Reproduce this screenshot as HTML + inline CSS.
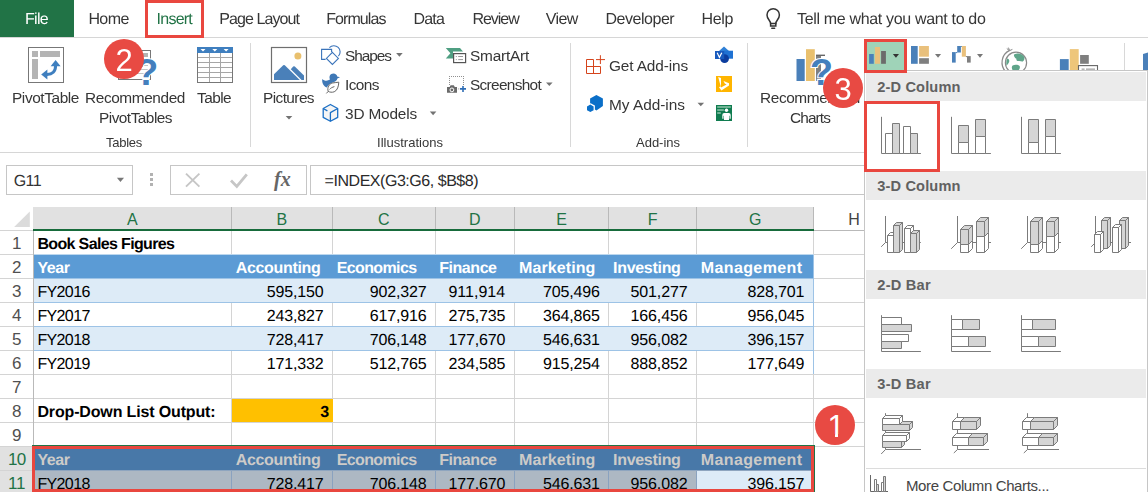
<!DOCTYPE html>
<html lang="en"><head><meta charset="utf-8"><title>Excel Insert Column Chart</title>
<style>
html,body{margin:0;padding:0;background:#fff;}
body{width:1148px;height:492px;overflow:hidden;font-family:"Liberation Sans",sans-serif;}
#app{position:relative;width:1148px;height:492px;overflow:hidden;background:#fff;}
.t,.t2{position:absolute;white-space:nowrap;line-height:20px;height:20px;}
.a{position:absolute;}
.badge{position:absolute;width:40px;height:40px;border-radius:50%;background:#e84a43;color:#fff;font-size:31px;line-height:44px;text-align:center;}
svg{position:absolute;overflow:visible;}
.gl{position:absolute;left:0;top:0;width:864px;height:152px;will-change:transform;}

</style></head>
<body>
<div id="app">
<!-- tab bar -->
<div class="a" style="left:0;top:0;width:74px;height:37px;background:#217346"></div>
<div class="a" style="left:0;top:37px;width:1148px;height:1px;background:#d6d6d6"></div>
<div class="a" style="left:145px;top:0px;width:53px;height:32px;border:3px solid #e9473f"></div>
<!-- ribbon bottom -->
<div class="a" style="left:0;top:152px;width:866px;height:1px;background:#d6d6d6"></div>
<!-- group separators -->
<div class="a" style="left:250px;top:43px;width:1px;height:104px;background:#d8d8d8"></div>
<div class="a" style="left:570px;top:43px;width:1px;height:104px;background:#d8d8d8"></div>
<div class="a" style="left:747px;top:43px;width:1px;height:104px;background:#d8d8d8"></div>
<div class="a" style="left:1124px;top:43px;width:1px;height:28px;background:#d8d8d8"></div>

<!-- formula bar -->
<div class="a" style="left:6px;top:165px;width:127px;height:30px;border:1px solid #c6c6c6;box-sizing:border-box"></div>
<div class="a" style="left:170px;top:165px;width:137px;height:30px;border:1px solid #c6c6c6;box-sizing:border-box"></div>
<div class="a" style="left:310px;top:165px;width:560px;height:30px;border:1px solid #c6c6c6;box-sizing:border-box"></div>

<!-- sheet -->
<div id="sheet" class="a" style="left:0;top:207px;width:866px;height:285px;overflow:hidden">
<div class="a" style="left:33px;top:0px;width:781px;height:22px;background:#e1e1e1;"></div>
<div class="a" style="left:0px;top:240px;width:33px;height:48px;background:#e1e1e1;"></div>
<svg style="left:0;top:0" width="34" height="24" viewBox="0 0 34 24"><path d="M29.8 4.6 V19.9 H14.1 Z" fill="#dbdbdb"/></svg>
<div class="a" style="left:231px;top:0px;width:1px;height:22px;background:#b9b9b9;"></div>
<div class="a" style="left:332px;top:0px;width:1px;height:22px;background:#b9b9b9;"></div>
<div class="a" style="left:435px;top:0px;width:1px;height:22px;background:#b9b9b9;"></div>
<div class="a" style="left:514px;top:0px;width:1px;height:22px;background:#b9b9b9;"></div>
<div class="a" style="left:608px;top:0px;width:1px;height:22px;background:#b9b9b9;"></div>
<div class="a" style="left:696px;top:0px;width:1px;height:22px;background:#b9b9b9;"></div>
<div class="a" style="left:813px;top:0px;width:1px;height:22px;background:#b9b9b9;"></div>
<div class="a" style="left:814px;top:23px;width:52px;height:1px;background:#b9b9b9;"></div>
<div class="a" style="left:33px;top:22px;width:781px;height:2px;background:#176b3b;"></div>
<div class="a" style="left:0px;top:23px;width:33px;height:1px;background:#d4d4d4;"></div>
<div class="a" style="left:34px;top:48px;width:779px;height:23px;background:#5b9bd5;"></div>
<div class="a" style="left:34px;top:72px;width:779px;height:23px;background:#ddebf7;"></div>
<div class="a" style="left:34px;top:120px;width:779px;height:23px;background:#ddebf7;"></div>
<div class="a" style="left:232px;top:192px;width:100px;height:23px;background:#ffc000;"></div>
<div class="a" style="left:34px;top:240px;width:779px;height:23px;background:#4878a8;"></div>
<div class="a" style="left:34px;top:263px;width:779px;height:1px;background:#8ea5bf;"></div>
<div class="a" style="left:34px;top:264px;width:779px;height:24px;background:#adb8c3;"></div>
<div class="a" style="left:697px;top:264px;width:116px;height:24px;background:#ddebf7;"></div>
<div class="a" style="left:0px;top:47px;width:33px;height:1px;background:#d4d4d4;"></div>
<div class="a" style="left:34px;top:47px;width:780px;height:1px;background:#bcd7ee;"></div>
<div class="a" style="left:814px;top:47px;width:60px;height:1px;background:#d4d4d4;"></div>
<div class="a" style="left:0px;top:71px;width:33px;height:1px;background:#d4d4d4;"></div>
<div class="a" style="left:34px;top:71px;width:780px;height:1px;background:#9dc3e6;"></div>
<div class="a" style="left:814px;top:71px;width:60px;height:1px;background:#d4d4d4;"></div>
<div class="a" style="left:0px;top:95px;width:33px;height:1px;background:#d4d4d4;"></div>
<div class="a" style="left:34px;top:95px;width:780px;height:1px;background:#9dc3e6;"></div>
<div class="a" style="left:814px;top:95px;width:60px;height:1px;background:#d4d4d4;"></div>
<div class="a" style="left:0px;top:119px;width:33px;height:1px;background:#d4d4d4;"></div>
<div class="a" style="left:34px;top:119px;width:780px;height:1px;background:#9dc3e6;"></div>
<div class="a" style="left:814px;top:119px;width:60px;height:1px;background:#d4d4d4;"></div>
<div class="a" style="left:0px;top:143px;width:33px;height:1px;background:#d4d4d4;"></div>
<div class="a" style="left:34px;top:143px;width:780px;height:1px;background:#9dc3e6;"></div>
<div class="a" style="left:814px;top:143px;width:60px;height:1px;background:#d4d4d4;"></div>
<div class="a" style="left:0px;top:167px;width:33px;height:1px;background:#d4d4d4;"></div>
<div class="a" style="left:34px;top:167px;width:841px;height:1px;background:#d4d4d4;"></div>
<div class="a" style="left:0px;top:191px;width:33px;height:1px;background:#d4d4d4;"></div>
<div class="a" style="left:34px;top:191px;width:841px;height:1px;background:#d4d4d4;"></div>
<div class="a" style="left:0px;top:215px;width:33px;height:1px;background:#d4d4d4;"></div>
<div class="a" style="left:34px;top:215px;width:841px;height:1px;background:#d4d4d4;"></div>
<div class="a" style="left:0px;top:239px;width:33px;height:1px;background:#d4d4d4;"></div>
<div class="a" style="left:34px;top:239px;width:841px;height:1px;background:#d4d4d4;"></div>
<div class="a" style="left:0px;top:263px;width:33px;height:1px;background:#d4d4d4;"></div>
<div class="a" style="left:0px;top:287px;width:33px;height:1px;background:#d4d4d4;"></div>
<div class="a" style="left:34px;top:287px;width:841px;height:1px;background:#d4d4d4;"></div>
<div class="a" style="left:33px;top:24px;width:1px;height:270px;background:#b9b9b9;"></div>
<div class="a" style="left:231px;top:24px;width:1px;height:23px;background:#d4d4d4;"></div>
<div class="a" style="left:231px;top:96px;width:1px;height:23px;background:#d4d4d4;"></div>
<div class="a" style="left:231px;top:144px;width:1px;height:23px;background:#d4d4d4;"></div>
<div class="a" style="left:231px;top:168px;width:1px;height:23px;background:#d4d4d4;"></div>
<div class="a" style="left:231px;top:192px;width:1px;height:23px;background:#d4d4d4;"></div>
<div class="a" style="left:231px;top:216px;width:1px;height:23px;background:#d4d4d4;"></div>
<div class="a" style="left:231px;top:264px;width:1px;height:24px;background:#8aa2bf;"></div>
<div class="a" style="left:332px;top:24px;width:1px;height:23px;background:#d4d4d4;"></div>
<div class="a" style="left:332px;top:96px;width:1px;height:23px;background:#d4d4d4;"></div>
<div class="a" style="left:332px;top:144px;width:1px;height:23px;background:#d4d4d4;"></div>
<div class="a" style="left:332px;top:168px;width:1px;height:23px;background:#d4d4d4;"></div>
<div class="a" style="left:332px;top:192px;width:1px;height:23px;background:#ffc000;"></div>
<div class="a" style="left:332px;top:216px;width:1px;height:23px;background:#d4d4d4;"></div>
<div class="a" style="left:332px;top:264px;width:1px;height:24px;background:#8aa2bf;"></div>
<div class="a" style="left:435px;top:24px;width:1px;height:23px;background:#d4d4d4;"></div>
<div class="a" style="left:435px;top:96px;width:1px;height:23px;background:#d4d4d4;"></div>
<div class="a" style="left:435px;top:144px;width:1px;height:23px;background:#d4d4d4;"></div>
<div class="a" style="left:435px;top:168px;width:1px;height:23px;background:#d4d4d4;"></div>
<div class="a" style="left:435px;top:192px;width:1px;height:23px;background:#d4d4d4;"></div>
<div class="a" style="left:435px;top:216px;width:1px;height:23px;background:#d4d4d4;"></div>
<div class="a" style="left:435px;top:264px;width:1px;height:24px;background:#8aa2bf;"></div>
<div class="a" style="left:514px;top:24px;width:1px;height:23px;background:#d4d4d4;"></div>
<div class="a" style="left:514px;top:96px;width:1px;height:23px;background:#d4d4d4;"></div>
<div class="a" style="left:514px;top:144px;width:1px;height:23px;background:#d4d4d4;"></div>
<div class="a" style="left:514px;top:168px;width:1px;height:23px;background:#d4d4d4;"></div>
<div class="a" style="left:514px;top:192px;width:1px;height:23px;background:#d4d4d4;"></div>
<div class="a" style="left:514px;top:216px;width:1px;height:23px;background:#d4d4d4;"></div>
<div class="a" style="left:514px;top:264px;width:1px;height:24px;background:#8aa2bf;"></div>
<div class="a" style="left:608px;top:24px;width:1px;height:23px;background:#d4d4d4;"></div>
<div class="a" style="left:608px;top:96px;width:1px;height:23px;background:#d4d4d4;"></div>
<div class="a" style="left:608px;top:144px;width:1px;height:23px;background:#d4d4d4;"></div>
<div class="a" style="left:608px;top:168px;width:1px;height:23px;background:#d4d4d4;"></div>
<div class="a" style="left:608px;top:192px;width:1px;height:23px;background:#d4d4d4;"></div>
<div class="a" style="left:608px;top:216px;width:1px;height:23px;background:#d4d4d4;"></div>
<div class="a" style="left:608px;top:264px;width:1px;height:24px;background:#8aa2bf;"></div>
<div class="a" style="left:696px;top:24px;width:1px;height:23px;background:#d4d4d4;"></div>
<div class="a" style="left:696px;top:96px;width:1px;height:23px;background:#d4d4d4;"></div>
<div class="a" style="left:696px;top:144px;width:1px;height:23px;background:#d4d4d4;"></div>
<div class="a" style="left:696px;top:168px;width:1px;height:23px;background:#d4d4d4;"></div>
<div class="a" style="left:696px;top:192px;width:1px;height:23px;background:#d4d4d4;"></div>
<div class="a" style="left:696px;top:216px;width:1px;height:23px;background:#d4d4d4;"></div>
<div class="a" style="left:696px;top:264px;width:1px;height:24px;background:#8aa2bf;"></div>
<div class="a" style="left:813px;top:24px;width:1px;height:23px;background:#d4d4d4;"></div>
<div class="a" style="left:813px;top:48px;width:1px;height:23px;background:#9dc3e6;"></div>
<div class="a" style="left:813px;top:72px;width:1px;height:23px;background:#9dc3e6;"></div>
<div class="a" style="left:813px;top:96px;width:1px;height:23px;background:#9dc3e6;"></div>
<div class="a" style="left:813px;top:120px;width:1px;height:23px;background:#9dc3e6;"></div>
<div class="a" style="left:813px;top:144px;width:1px;height:23px;background:#9dc3e6;"></div>
<div class="a" style="left:813px;top:168px;width:1px;height:23px;background:#d4d4d4;"></div>
<div class="a" style="left:813px;top:192px;width:1px;height:23px;background:#d4d4d4;"></div>
<div class="a" style="left:813px;top:216px;width:1px;height:23px;background:#d4d4d4;"></div>
<div class="a" style="left:813px;top:240px;width:1px;height:23px;background:#d4d4d4;"></div>
<div class="a" style="left:813px;top:264px;width:1px;height:24px;background:#8aa2bf;"></div>
<div class="a" style="left:32px;top:238px;width:781px;height:46px;border:1px solid #217346"></div>
</div>

<div class="a" style="left:866px;top:41px;width:39px;height:30px;background:#9fd3b8"></div>
<svg style="left:0;top:0" width="1148" height="160" viewBox="0 0 1148 160">
<g fill="none" stroke="#333" stroke-width="1.5" stroke-linecap="round"><path d="M770.6 23.4 C770.4 20.5 767 19 767 14.9 A6.2 6.2 0 1 1 779.4 14.9 C779.4 19 776 20.5 775.8 23.4 Z"/><path d="M770.6 23.4 V26 H775.8 V23.4"/><path d="M771.8 28.2 H774.6"/></g>
<g><rect x="28.5" y="47.5" width="35" height="35" fill="#fff" stroke="#777"/><rect x="32" y="51" width="6" height="6" fill="#b4b4b4"/><rect x="40" y="51" width="20" height="6" fill="#b4b4b4"/><rect x="32" y="59" width="6" height="20" fill="#b4b4b4"/><path d="M46.5 74.4 C52.5 74.6 55.6 71.5 55.6 65.5" fill="none" stroke="#3f7fbf" stroke-width="3"/><path d="M50.6 66.2 L55.6 60 L60.6 66.2 Z" fill="#3f7fbf"/><path d="M47.4 69.4 L41.2 74.4 L47.4 79.4 Z" fill="#3f7fbf"/></g>
<g><rect x="118.5" y="50.5" width="32" height="29" fill="#fff" stroke="#777"/><rect x="140" y="53" width="8" height="4" fill="#b4b4b4"/><g stroke="#c4c4c4" stroke-width="1.2"><path d="M122 61.5H148M122 65.5H148M122 69.5H148M122 73.5H148"/></g><text x="135.2" y="84.7" font-family="Liberation Sans, sans-serif" font-weight="700" font-size="37.7" fill="#447fbd" stroke="#fff" stroke-width="2" paint-order="stroke">?</text></g>
<g><rect x="197.5" y="47.5" width="35" height="35" fill="#fff" stroke="#777"/><g stroke="#a6a6a6" stroke-width="1"><path d="M198 57.5H232M198 62.5H232M198 67.5H232M198 72.5H232M198 77.5H232M209.5 53V82M220.5 53V82"/></g><rect x="197" y="47" width="36" height="6" fill="#3f7fbf"/><path d="M200.5 49 h5 l-2.5 2.6z M212.3 49 h5 l-2.5 2.6z M223.6 49 h5 l-2.5 2.6z" fill="#fff"/></g>
<g><rect x="271.5" y="47.5" width="35" height="35" fill="#fff" stroke="#6f6f6f" stroke-width="1.2"/><circle cx="297.9" cy="56" r="3.5" fill="#e9c06e"/><path d="M274 80 V74.2 L283.2 65.2 Q284 64.6 284.8 65.2 L299.8 80 Z" fill="#4a80b9"/><path d="M290.8 69.2 L293.2 66.6 Q294 66 294.8 66.6 L304 75.4 V80 H301.6 Z" fill="#4a80b9"/></g>
<g fill="none" stroke="#3b74ba" stroke-width="1.1"><path d="M325.6 59.4 H321.6 V49.4 H331.6 V52"/><path d="M332.4 52.4 L338.4 58.4 L332.4 64.4 L326.4 58.4 Z"/><path d="M329.4 47.6 A6.2 6.2 0 1 1 338.4 56.2"/></g>
<g><path d="M322.3 79 C324 81 327.5 81.4 330 79.6 C328.6 76.4 330.4 73.6 333.3 73.6 C335.6 73.6 337 75 337.2 76.6 L340 77.2 L337.4 78.6 C337 80.6 335.6 81.6 334 82 C330.6 83.4 328 85 326.8 87.6 C323.6 86.2 321.6 82.8 322.3 79 Z" fill="#3f78b6"/><path d="M328.2 91.4 C327 87.4 329 84 332.4 83 C334.6 82.4 337 82.6 338.8 82.2 C338.6 86 337.6 90.4 334.2 91.8 C332 92.6 329.8 92.2 328.2 91.4 Z M326.4 93.4 L328.2 91.4 M329.6 89.4 C330.6 88 332.4 87.2 334.4 86.6" fill="#fff" stroke="#666" stroke-width="1"/></g>
<g fill="#f5f5f5" stroke="#1b6fc5" stroke-width="1.3" stroke-linejoin="round"><path d="M330.4 104.5 L337.7 108.5 V117.4 L330.4 121.3 L323.2 117.4 V108.5 Z"/><path d="M330.4 121.3 V112.6 L337.7 108.5 M323.2 108.5 L327.4 110.9" fill="none"/></g>
<g><path d="M445.8 47.9 H460 L463 51.4 H453 V58.6 H445.8 L450.4 53.2 Z" fill="#4f9f82"/><rect x="453.6" y="53.6" width="12" height="9" fill="#fff" stroke="#555" stroke-width="1.2"/><path d="M455.8 56.5h1M455.8 59.6h1M458.2 56.5h4.8M458.2 59.6h4.8" stroke="#999" stroke-width="1"/></g>
<g><path d="M449 76.5 H464 M449.5 78 V86 M463.5 78 V86" stroke="#909090" stroke-width="1" stroke-dasharray="1 1" fill="none" shape-rendering="crispEdges"/><path d="M447 87 H449.6 L450.6 85.3 H453.8 L454.8 87 H457 V92.8 H447 Z" fill="#6a6a6a"/><circle cx="451.9" cy="89.9" r="1.9" fill="#6a6a6a" stroke="#fff" stroke-width="1"/><rect x="458.2" y="88.4" width="1" height="1" fill="#999"/><path d="M460 88.9 H466 M463 85.9 V91.9" stroke="#2e6db5" stroke-width="1.6"/></g>
<g fill="none" stroke="#d5441c" stroke-width="1"><path d="M586.5 59.5 H593.5 V73.5 M586.5 59.5 V73.5 H600.5 V66.5 H586.5"/><path d="M596 59.6 H605 M600.4 55.2 V64"/></g>
<g fill="#0b6fc8"><path d="M596.4 94.9 L602.9 98.5 V106.1 L596.4 110.4 L594.9 109.4 V105.6 L590.6 103.2 L590.1 103.4 V98.5 Z"/><path d="M590.3 104.6 L593.6 106.5 V110.2 L590.3 112.1 L587 110.2 V106.5 Z"/></g>
<g><path d="M724 46.6 L729 51 L724 55.4 L719 51 Z" fill="#2f80d6"/><rect x="724" y="50.7" width="9" height="8" fill="#1f72d3"/><circle cx="724.6" cy="58.6" r="4.4" fill="#0c3d9e"/><rect x="715" y="51" width="9.2" height="8" fill="#185abd"/><path d="M717.2 52.8 L719.4 57.4 L721.8 52.8" fill="none" stroke="#fff" stroke-width="1.2"/></g>
<g><rect x="716" y="76" width="16" height="16" fill="#ffb500"/><path d="M718.2 77 L721 78.1 V86 L719 87.3 L721.4 90.6 L729 85.6 V83.2 L723.5 81 L724.8 83.6 L726.6 84.5 L721 87.4" fill="#fff"/></g>
<g><rect x="716" y="105" width="16" height="16" fill="#107c50"/><path d="M717.2 107h13.6M717.2 110h6.6M717.2 113.1h3.6" stroke="#8fc5ab" stroke-width="1.5"/><circle cx="726.5" cy="110.2" r="1.7" fill="#fff"/><path d="M722.3 118.8 V115 Q722.3 113 724.3 113 H728.7 Q730.7 113 730.7 115 V118.8 H729.5 V115.8 H729 V120 H724 V115.8 H723.5 V118.8 Z" fill="#fff"/></g>
<g><rect x="796.5" y="59" width="8.2" height="22" fill="#4a80b9"/><rect x="806" y="49.2" width="8.8" height="31.8" fill="#e9c06e"/><rect x="816" y="56" width="5" height="25" fill="#7f7f7f"/><rect x="816" y="54.6" width="9" height="1.4" fill="#666"/><text x="810" y="84.7" font-family="Liberation Sans, sans-serif" font-weight="700" font-size="37.7" fill="#447fbd" stroke="#fff" stroke-width="2" paint-order="stroke">?</text></g>
<g><rect x="869.1" y="54" width="4.7" height="9.8" fill="#4a80b9"/><rect x="874.9" y="47" width="5.2" height="16.8" fill="#e9c07c"/><rect x="881.1" y="51" width="4.8" height="12.8" fill="#6b6b6b"/><path d="M892.9 54 H899 L895.95 57.7 Z" fill="#333"/></g>
<g><rect x="911" y="46" width="6.7" height="17.8" fill="#4a80b9"/><rect x="919.1" y="46" width="9.8" height="10.7" fill="#e9c07c"/><rect x="919.1" y="58.2" width="9.8" height="5.6" fill="#7f7f7f"/><path d="M935 54 H941.1 L938.05 57.7 Z" fill="#777"/></g>
<g><rect x="952" y="52.1" width="3.7" height="10.5" fill="#4a80b9"/><rect x="957.2" y="46" width="3.7" height="6.5" fill="#4a80b9"/><rect x="955.7" y="52.1" width="1.5" height="1" fill="#4a80b9"/><rect x="960.9" y="46" width="1" height="1" fill="#4a80b9"/><rect x="961.8" y="46" width="4.1" height="10.7" fill="#e9c07c"/><rect x="965.9" y="56.1" width="1.1" height="1" fill="#7f7f7f"/><rect x="967" y="56.1" width="3.7" height="6.5" fill="#7f7f7f"/><path d="M977 54 H983 L980 57.7 Z" fill="#777"/></g>
<g><circle cx="1016" cy="62.7" r="10.6" fill="#fff" stroke="#8a8a8a" stroke-width="1.2"/><path d="M1009.6 50.4 A13.4 13.4 0 0 0 1006 72" fill="none" stroke="#8a8a8a" stroke-width="1.2"/><path d="M1006.8 48.6 L1009.6 50.6 L1012.4 49.4 M1009.6 50.4 L1008.4 47.6" fill="none" stroke="#8a8a8a" stroke-width="1"/><path d="M1014 54.6 C1017 52.6 1021.5 53.4 1023.6 56 C1025 58 1024.6 60.4 1022.8 61.4 C1021.4 61.8 1020.2 60.6 1018.6 61 C1017 61.4 1016.2 60 1016.4 58.8 C1015 58 1013.6 56.4 1014 54.6 Z M1007.2 58.6 C1008.6 58.8 1009.6 60 1009.2 61.6 C1008.8 63.4 1007.6 64.6 1006.6 65.6 C1006 63.4 1006.2 60.6 1007.2 58.6 Z M1012.6 65.4 C1014.8 64.4 1018.2 64.6 1019.6 66 C1020.4 67.6 1019.4 69.6 1018 70.6 L1012.8 70.6 C1011.6 68.8 1011.4 66.6 1012.6 65.4 Z" fill="#5fa58a"/></g>
<g><rect x="1059.9" y="59.1" width="8.8" height="12" fill="#4a80b9"/><rect x="1069.8" y="49.1" width="8.9" height="22" fill="#eec67a"/><rect x="1080.1" y="55" width="8.7" height="8.8" fill="#7f7f7f"/><rect x="1078.5" y="65.6" width="19" height="8" fill="#fff" stroke="#666" stroke-width="1.1"/><rect x="1081.6" y="68.4" width="3" height="2" fill="#b4b4b4"/><rect x="1086" y="68.4" width="9" height="2" fill="#b4b4b4"/></g>
<path d="M1143 54 L1148 52.4 V72 H1143 Z" fill="#4a80b9"/>
<path d="M396.1 53.1 h6.6 l-3.3 3.6 z" fill="#737373"/>
<path d="M546 82.5 h6.6 l-3.3 3.6 z" fill="#737373"/>
<path d="M429.8 111.6 h6.6 l-3.3 3.6 z" fill="#737373"/>
<path d="M285.7 115.9 h6.6 l-3.3 3.6 z" fill="#737373"/>
<path d="M697.5 102.7 h6.6 l-3.3 3.6 z" fill="#737373"/>
</svg><svg style="left:0;top:160px" width="320" height="40" viewBox="0 160 320 40">
<path d="M116.9 177.8 H124 L120.45 182 Z" fill="#777"/>
<g fill="#b2b2b2"><rect x="150" y="173" width="3" height="3"/><rect x="150" y="178" width="3" height="3"/><rect x="150" y="183" width="3" height="3"/></g>
<path d="M186 173.6 L199.4 186.6 M199.4 173.6 L186 186.6" stroke="#c6c6c6" stroke-width="1.9" fill="none"/>
<path d="M231 180.6 L236.8 186.4 L246.8 174.4" stroke="#c6c6c6" stroke-width="2.8" fill="none"/>
</svg>
<!-- dropdown panel -->
<div class="a" style="left:864px;top:70px;width:284px;height:430px;background:#fff;border:1px solid #c6c6c6;box-sizing:border-box"></div>
<div class="a" style="left:866px;top:72px;width:280px;height:29px;background:#ebebeb"></div>
<div class="a" style="left:866px;top:171px;width:280px;height:29px;background:#ebebeb"></div>
<div class="a" style="left:866px;top:270px;width:280px;height:29px;background:#ebebeb"></div>
<div class="a" style="left:866px;top:369px;width:280px;height:29px;background:#ebebeb"></div>
<div class="a" style="left:866px;top:468px;width:280px;height:1px;background:#dcdcdc"></div>
<svg style="left:0;top:0" width="1148" height="492" viewBox="0 0 1148 492">
<g stroke="#7b7b7b" stroke-width="1" stroke-linejoin="round">
<path d="M881.5 116.8 V153.5 H920.9" fill="none"/>
<path d="M951.5 116.8 V153.5 H990.9" fill="none"/>
<path d="M1021.5 116.8 V153.5 H1060.9" fill="none"/>
<rect x="885.5" y="133.5" width="7" height="20" fill="#fff"/>
<rect x="892.5" y="123.5" width="7" height="30" fill="#d5d5d5"/>
<rect x="903.5" y="126.5" width="7" height="27" fill="#fff"/>
<rect x="910.5" y="133.5" width="7" height="20" fill="#d5d5d5"/>
<rect x="958.5" y="125.5" width="10" height="17" fill="#d5d5d5"/>
<rect x="958.5" y="142.5" width="10" height="11" fill="#fff"/>
<rect x="975.5" y="119.5" width="10" height="17" fill="#d5d5d5"/>
<rect x="975.5" y="136.5" width="10" height="17" fill="#fff"/>
<rect x="1028.5" y="119.5" width="10" height="23" fill="#d5d5d5"/>
<rect x="1028.5" y="142.5" width="10" height="11" fill="#fff"/>
<rect x="1045.5" y="119.5" width="10" height="17" fill="#d5d5d5"/>
<rect x="1045.5" y="136.5" width="10" height="17" fill="#fff"/>
<path d="M885.5 216 V242.5 H920.8 M885.5 242.5 L881.2 246.8" fill="none"/>
<path d="M887.5 235.5 L890.5 232.5 H896.5 L893.5 235.5 Z" fill="#fff"/><path d="M893.5 235.5 L896.5 232.5 V249.5 L893.5 252.5 Z" fill="#fff"/><rect x="887.5" y="235.5" width="6" height="17" fill="#fff"/>
<path d="M893.5 225.5 L896.5 222.5 H902.5 L899.5 225.5 Z" fill="#d5d5d5"/><path d="M899.5 225.5 L902.5 222.5 V249.5 L899.5 252.5 Z" fill="#d5d5d5"/><rect x="893.5" y="225.5" width="6" height="27" fill="#d5d5d5"/>
<path d="M904.5 228.5 L907.5 225.5 H913.5 L910.5 228.5 Z" fill="#fff"/><path d="M910.5 228.5 L913.5 225.5 V249.5 L910.5 252.5 Z" fill="#fff"/><rect x="904.5" y="228.5" width="6" height="24" fill="#fff"/>
<path d="M910.5 233.5 L913.5 230.5 H919.5 L916.5 233.5 Z" fill="#d5d5d5"/><path d="M916.5 233.5 L919.5 230.5 V249.5 L916.5 252.5 Z" fill="#d5d5d5"/><rect x="910.5" y="233.5" width="6" height="19" fill="#d5d5d5"/>
<path d="M957.5 216 V242.5 H991 M957.5 242.5 L951.2 248.8" fill="none"/>
<path d="M960.5 244.5 L964.5 240.5 H972.5 L968.5 244.5 Z" fill="#fff"/><path d="M968.5 244.5 L972.5 240.5 V248.5 L968.5 252.5 Z" fill="#fff"/><rect x="960.5" y="244.5" width="8" height="8" fill="#fff"/>
<path d="M960.5 229.5 L964.5 225.5 H972.5 L968.5 229.5 Z" fill="#d5d5d5"/><path d="M968.5 229.5 L972.5 225.5 V240.5 L968.5 244.5 Z" fill="#d5d5d5"/><rect x="960.5" y="229.5" width="8" height="15" fill="#d5d5d5"/>
<path d="M976.5 236.5 L980.5 232.5 H988.5 L984.5 236.5 Z" fill="#fff"/><path d="M984.5 236.5 L988.5 232.5 V248.5 L984.5 252.5 Z" fill="#fff"/><rect x="976.5" y="236.5" width="8" height="16" fill="#fff"/>
<path d="M976.5 221.5 L980.5 217.5 H988.5 L984.5 221.5 Z" fill="#d5d5d5"/><path d="M984.5 221.5 L988.5 217.5 V232.5 L984.5 236.5 Z" fill="#d5d5d5"/><rect x="976.5" y="221.5" width="8" height="15" fill="#d5d5d5"/>
<path d="M1027.5 216 V242.5 H1061 M1027.5 242.5 L1021.2 248.8" fill="none"/>
<path d="M1030.5 244.5 L1034.5 240.5 H1042.5 L1038.5 244.5 Z" fill="#fff"/><path d="M1038.5 244.5 L1042.5 240.5 V248.5 L1038.5 252.5 Z" fill="#fff"/><rect x="1030.5" y="244.5" width="8" height="8" fill="#fff"/>
<path d="M1030.5 221.5 L1034.5 217.5 H1042.5 L1038.5 221.5 Z" fill="#d5d5d5"/><path d="M1038.5 221.5 L1042.5 217.5 V240.5 L1038.5 244.5 Z" fill="#d5d5d5"/><rect x="1030.5" y="221.5" width="8" height="23" fill="#d5d5d5"/>
<path d="M1046.5 236.5 L1050.5 232.5 H1058.5 L1054.5 236.5 Z" fill="#fff"/><path d="M1054.5 236.5 L1058.5 232.5 V248.5 L1054.5 252.5 Z" fill="#fff"/><rect x="1046.5" y="236.5" width="8" height="16" fill="#fff"/>
<path d="M1046.5 221.5 L1050.5 217.5 H1058.5 L1054.5 221.5 Z" fill="#d5d5d5"/><path d="M1054.5 221.5 L1058.5 217.5 V232.5 L1054.5 236.5 Z" fill="#d5d5d5"/><rect x="1046.5" y="221.5" width="8" height="15" fill="#d5d5d5"/>
<path d="M1095.5 216 V242.5 H1131 M1095.5 242.5 L1091.2 246.8" fill="none"/>
<path d="M1101.5 220.5 L1104.5 217.5 H1110.5 L1107.5 220.5 Z" fill="#d5d5d5"/><path d="M1107.5 220.5 L1110.5 217.5 V245.5 L1107.5 248.5 Z" fill="#d5d5d5"/><rect x="1101.5" y="220.5" width="6" height="28" fill="#d5d5d5"/>
<path d="M1119.5 220.5 L1122.5 217.5 H1128.5 L1125.5 220.5 Z" fill="#d5d5d5"/><path d="M1125.5 220.5 L1128.5 217.5 V245.5 L1125.5 248.5 Z" fill="#d5d5d5"/><rect x="1119.5" y="220.5" width="6" height="28" fill="#d5d5d5"/>
<path d="M1094.5 234.5 L1097.5 231.5 H1103.5 L1100.5 234.5 Z" fill="#fff"/><path d="M1100.5 234.5 L1103.5 231.5 V249.5 L1100.5 252.5 Z" fill="#fff"/><rect x="1094.5" y="234.5" width="6" height="18" fill="#fff"/>
<path d="M1112.5 227.5 L1115.5 224.5 H1121.5 L1118.5 227.5 Z" fill="#fff"/><path d="M1118.5 227.5 L1121.5 224.5 V249.5 L1118.5 252.5 Z" fill="#fff"/><rect x="1112.5" y="227.5" width="6" height="25" fill="#fff"/>
<path d="M881.5 315.2 V351.5 H920.9" fill="none"/>
<path d="M951.5 315.2 V351.5 H990.9" fill="none"/>
<path d="M1021.5 315.2 V351.5 H1060.9" fill="none"/>
<rect x="881.5" y="317.5" width="20" height="7" fill="#fff"/>
<rect x="881.5" y="324.5" width="30" height="7" fill="#d5d5d5"/>
<rect x="881.5" y="334.5" width="27" height="7" fill="#fff"/>
<rect x="881.5" y="341.5" width="20" height="7" fill="#d5d5d5"/>
<rect x="951.5" y="319.5" width="11" height="10" fill="#fff"/>
<rect x="962.5" y="319.5" width="17" height="10" fill="#d5d5d5"/>
<rect x="951.5" y="336.5" width="17" height="10" fill="#fff"/>
<rect x="968.5" y="336.5" width="17" height="10" fill="#d5d5d5"/>
<rect x="1021.5" y="319.5" width="11" height="10" fill="#fff"/>
<rect x="1032.5" y="319.5" width="23" height="10" fill="#d5d5d5"/>
<rect x="1021.5" y="336.5" width="17" height="10" fill="#fff"/>
<rect x="1038.5" y="336.5" width="17" height="10" fill="#d5d5d5"/>
<path d="M885.5 413.2 V449.5 H921 M885.5 449.5 L881.2 454" fill="none"/>
<path d="M882.5 424.5 L885.5 421.5 H912.5 L909.5 424.5 Z" fill="#d5d5d5"/><path d="M909.5 424.5 L912.5 421.5 V427.5 L909.5 430.5 Z" fill="#d5d5d5"/><rect x="882.5" y="424.5" width="27" height="6" fill="#d5d5d5"/>
<path d="M882.5 418.5 L885.5 415.5 H902.5 L899.5 418.5 Z" fill="#fff"/><path d="M899.5 418.5 L902.5 415.5 V421.5 L899.5 424.5 Z" fill="#fff"/><rect x="882.5" y="418.5" width="17" height="6" fill="#fff"/>
<path d="M882.5 441.5 L885.5 438.5 H904.5 L901.5 441.5 Z" fill="#d5d5d5"/><path d="M901.5 441.5 L904.5 438.5 V444.5 L901.5 447.5 Z" fill="#d5d5d5"/><rect x="882.5" y="441.5" width="19" height="6" fill="#d5d5d5"/>
<path d="M882.5 435.5 L885.5 432.5 H909.5 L906.5 435.5 Z" fill="#fff"/><path d="M906.5 435.5 L909.5 432.5 V438.5 L906.5 441.5 Z" fill="#fff"/><rect x="882.5" y="435.5" width="24" height="6" fill="#fff"/>
<path d="M957.5 413.2 V449.5 H989 M957.5 449.5 L953.8 453" fill="none"/>
<path d="M952.5 421.5 L956.5 417.5 H964.5 L960.5 421.5 Z" fill="#fff"/><path d="M960.5 421.5 L964.5 417.5 V425.5 L960.5 429.5 Z" fill="#fff"/><rect x="952.5" y="421.5" width="8" height="8" fill="#fff"/>
<path d="M960.5 421.5 L964.5 417.5 H980.5 L976.5 421.5 Z" fill="#d5d5d5"/><path d="M976.5 421.5 L980.5 417.5 V425.5 L976.5 429.5 Z" fill="#d5d5d5"/><rect x="960.5" y="421.5" width="16" height="8" fill="#d5d5d5"/>
<path d="M952.5 437.5 L956.5 433.5 H972.5 L968.5 437.5 Z" fill="#fff"/><path d="M968.5 437.5 L972.5 433.5 V441.5 L968.5 445.5 Z" fill="#fff"/><rect x="952.5" y="437.5" width="16" height="8" fill="#fff"/>
<path d="M968.5 437.5 L972.5 433.5 H987.5 L983.5 437.5 Z" fill="#d5d5d5"/><path d="M983.5 437.5 L987.5 433.5 V441.5 L983.5 445.5 Z" fill="#d5d5d5"/><rect x="968.5" y="437.5" width="15" height="8" fill="#d5d5d5"/>
<path d="M1027.5 413.2 V449.5 H1059 M1027.5 449.5 L1023.8 453" fill="none"/>
<path d="M1022.5 421.5 L1026.5 417.5 H1034.5 L1030.5 421.5 Z" fill="#fff"/><path d="M1030.5 421.5 L1034.5 417.5 V425.5 L1030.5 429.5 Z" fill="#fff"/><rect x="1022.5" y="421.5" width="8" height="8" fill="#fff"/>
<path d="M1030.5 421.5 L1034.5 417.5 H1057.5 L1053.5 421.5 Z" fill="#d5d5d5"/><path d="M1053.5 421.5 L1057.5 417.5 V425.5 L1053.5 429.5 Z" fill="#d5d5d5"/><rect x="1030.5" y="421.5" width="23" height="8" fill="#d5d5d5"/>
<path d="M1022.5 437.5 L1026.5 433.5 H1042.5 L1038.5 437.5 Z" fill="#fff"/><path d="M1038.5 437.5 L1042.5 433.5 V441.5 L1038.5 445.5 Z" fill="#fff"/><rect x="1022.5" y="437.5" width="16" height="8" fill="#fff"/>
<path d="M1038.5 437.5 L1042.5 433.5 H1057.5 L1053.5 437.5 Z" fill="#d5d5d5"/><path d="M1053.5 437.5 L1057.5 433.5 V441.5 L1053.5 445.5 Z" fill="#d5d5d5"/><rect x="1038.5" y="437.5" width="15" height="8" fill="#d5d5d5"/>
<path d="M870.5 475 V491.5 H888" fill="none" stroke="#666"/>
<rect x="874.5" y="479.5" width="2" height="12" fill="#fff"/>
<rect x="876.5" y="484.5" width="2" height="7" fill="#d5d5d5"/>
<rect x="881.5" y="482.5" width="2" height="9" fill="#fff"/>
<rect x="883.5" y="476.5" width="2" height="15" fill="#d5d5d5"/>
</g>
</svg>
<!-- selected chart type -->
<div class="a" style="left:864px;top:101px;width:70px;height:65px;border:3px solid #e9473f"></div>
<!-- chart button selected -->
<div class="a" style="left:864px;top:39px;width:37px;height:28px;border:3px solid #e9473f"></div>


<span class="t2" style="left:274px;top:169px;font-family:'Liberation Serif',serif;font-style:italic;font-weight:700;font-size:20px;color:#666;letter-spacing:0px">fx</span>
<div class="gl"><span class="t" style="left:25.0px;top:9.5px;font-size:16px;color:#ffffff;letter-spacing:-0.695px;text-rendering:geometricPrecision;">File</span>
<span class="t" style="left:88.4px;top:9.5px;font-size:16px;color:#363636;letter-spacing:-0.572px;text-rendering:geometricPrecision;">Home</span>
<span class="t" style="left:156.6px;top:9.5px;font-size:16px;color:#217346;letter-spacing:-0.769px;text-rendering:geometricPrecision;">Insert</span>
<span class="t" style="left:219.2px;top:9.5px;font-size:16px;color:#363636;letter-spacing:-0.914px;text-rendering:geometricPrecision;">Page Layout</span>
<span class="t" style="left:326.2px;top:9.5px;font-size:16px;color:#363636;letter-spacing:-0.911px;text-rendering:geometricPrecision;">Formulas</span>
<span class="t" style="left:413.4px;top:9.5px;font-size:16px;color:#363636;letter-spacing:-0.749px;text-rendering:geometricPrecision;">Data</span>
<span class="t" style="left:472.5px;top:9.5px;font-size:16px;color:#363636;letter-spacing:-1.045px;text-rendering:geometricPrecision;">Review</span>
<span class="t" style="left:545.7px;top:9.5px;font-size:16px;color:#363636;letter-spacing:-0.598px;text-rendering:geometricPrecision;">View</span>
<span class="t" style="left:605.5px;top:9.5px;font-size:16px;color:#363636;letter-spacing:-0.471px;text-rendering:geometricPrecision;">Developer</span>
<span class="t" style="left:701.5px;top:9.5px;font-size:16px;color:#363636;letter-spacing:-0.352px;text-rendering:geometricPrecision;">Help</span>
<span class="t" style="left:797.0px;top:9.5px;font-size:16px;color:#363636;letter-spacing:-0.331px;text-rendering:geometricPrecision;">Tell me what you want to do</span>
<span class="t" style="left:12.0px;top:87.5px;font-size:15.4px;color:#363636;letter-spacing:-0.402px;">PivotTable</span>
<span class="t" style="left:85.0px;top:87.5px;font-size:15.4px;color:#363636;letter-spacing:-0.398px;">Recommended</span>
<span class="t" style="left:99.0px;top:107.5px;font-size:15.4px;color:#363636;letter-spacing:-0.518px;">PivotTables</span>
<span class="t" style="left:197.0px;top:87.5px;font-size:15.4px;color:#363636;letter-spacing:-0.559px;">Table</span>
<span class="t" style="left:106.0px;top:132.5px;font-size:13px;color:#363636;letter-spacing:-0.263px;">Tables</span>
<span class="t" style="left:263.0px;top:87.5px;font-size:15.4px;color:#363636;letter-spacing:-0.576px;">Pictures</span>
<span class="t" style="left:345.0px;top:45.5px;font-size:15.4px;color:#363636;letter-spacing:-1.034px;">Shapes</span>
<span class="t" style="left:345.0px;top:74.5px;font-size:15.4px;color:#363636;letter-spacing:-0.559px;">Icons</span>
<span class="t" style="left:345.0px;top:103.5px;font-size:15.4px;color:#363636;letter-spacing:-0.175px;">3D Models</span>
<span class="t" style="left:470.0px;top:45.5px;font-size:15.4px;color:#363636;letter-spacing:-0.215px;">SmartArt</span>
<span class="t" style="left:470.0px;top:74.5px;font-size:15.4px;color:#363636;letter-spacing:-0.686px;">Screenshot</span>
<span class="t" style="left:377.0px;top:132.5px;font-size:13px;color:#363636;letter-spacing:0.019px;">Illustrations</span>
<span class="t" style="left:609.0px;top:55.5px;font-size:15.4px;color:#363636;letter-spacing:-0.129px;">Get Add-ins</span>
<span class="t" style="left:609.0px;top:94.5px;font-size:15.4px;color:#363636;letter-spacing:-0.014px;">My Add-ins</span>
<span class="t" style="left:636.0px;top:132.5px;font-size:13px;color:#363636;letter-spacing:-0.011px;">Add-ins</span>
<span class="t" style="left:760.0px;top:87.5px;font-size:15.4px;color:#363636;letter-spacing:-0.398px;">Recommended</span>
<span class="t" style="left:790.0px;top:107.5px;font-size:15.4px;color:#363636;letter-spacing:-0.891px;">Charts</span></div>
<span class="t" style="left:13.7px;top:172.0px;font-size:16px;color:#333;letter-spacing:-0.587px;text-rendering:geometricPrecision;">G11</span>
<span class="t" style="left:324.6px;top:172.0px;font-size:16px;color:#2a2a2a;letter-spacing:-0.463px;text-rendering:geometricPrecision;">=INDEX(G3:G6, $B$8)</span>
<span class="t" style="left:877.3px;top:76.5px;font-size:14.6px;color:#616161;font-weight:700;letter-spacing:0.141px;">2-D Column</span>
<span class="t" style="left:877.3px;top:175.5px;font-size:14.6px;color:#616161;font-weight:700;letter-spacing:0.141px;">3-D Column</span>
<span class="t" style="left:877.3px;top:274.5px;font-size:14.6px;color:#616161;font-weight:700;letter-spacing:0.228px;">2-D Bar</span>
<span class="t" style="left:877.3px;top:373.5px;font-size:14.6px;color:#616161;font-weight:700;letter-spacing:0.228px;">3-D Bar</span>
<span class="t" style="left:906.0px;top:475.5px;font-size:15px;color:#444;letter-spacing:-0.376px;">More Column Charts...</span>
<span class="t" style="left:126.9px;top:210.2px;font-size:16px;color:#217346;">A</span>
<span class="t" style="left:276.6px;top:210.2px;font-size:16px;color:#217346;">B</span>
<span class="t" style="left:378.0px;top:210.2px;font-size:16px;color:#217346;">C</span>
<span class="t" style="left:469.0px;top:210.2px;font-size:16px;color:#217346;">D</span>
<span class="t" style="left:556.2px;top:210.2px;font-size:16px;color:#217346;">E</span>
<span class="t" style="left:647.7px;top:210.2px;font-size:16px;color:#217346;">F</span>
<span class="t" style="left:749.0px;top:210.2px;font-size:16px;color:#217346;">G</span>
<span class="t" style="left:848.2px;top:210.2px;font-size:16px;color:#444;">H</span>
<span class="t" style="left:12.0px;top:233.5px;font-size:17px;color:#505050;">1</span>
<span class="t" style="left:12.0px;top:257.5px;font-size:17px;color:#505050;">2</span>
<span class="t" style="left:12.0px;top:281.5px;font-size:17px;color:#505050;">3</span>
<span class="t" style="left:12.0px;top:305.5px;font-size:17px;color:#505050;">4</span>
<span class="t" style="left:12.0px;top:329.5px;font-size:17px;color:#505050;">5</span>
<span class="t" style="left:12.0px;top:353.5px;font-size:17px;color:#505050;">6</span>
<span class="t" style="left:12.0px;top:377.5px;font-size:17px;color:#505050;">7</span>
<span class="t" style="left:12.0px;top:401.5px;font-size:17px;color:#505050;">8</span>
<span class="t" style="left:12.0px;top:425.5px;font-size:17px;color:#505050;">9</span>
<span class="t" style="left:8.0px;top:449.5px;font-size:17px;color:#217346;letter-spacing:-0.711px;">10</span>
<span class="t" style="left:8.0px;top:473.5px;font-size:17px;color:#217346;letter-spacing:-0.078px;">11</span>
<span class="t" style="left:37.4px;top:234.5px;font-size:16px;color:#000;font-weight:700;letter-spacing:-0.644px;text-rendering:geometricPrecision;">Book Sales Figures</span>
<span class="t" style="left:37.4px;top:402.5px;font-size:16px;color:#000;font-weight:700;letter-spacing:-0.145px;text-rendering:geometricPrecision;">Drop-Down List Output:</span>
<span class="t" style="left:320.3px;top:402.5px;font-size:16px;color:#000;font-weight:700;text-rendering:geometricPrecision;">3</span>
<span class="t" style="left:37.4px;top:258.5px;font-size:16px;color:#fff;font-weight:700;letter-spacing:-0.428px;text-rendering:geometricPrecision;">Year</span>
<span class="t" style="left:37.4px;top:450.5px;font-size:16px;color:#cdcbc8;font-weight:700;letter-spacing:-0.428px;text-rendering:geometricPrecision;">Year</span>
<span class="t" style="left:235.7px;top:258.5px;font-size:16px;color:#fff;font-weight:700;letter-spacing:-0.320px;text-rendering:geometricPrecision;">Accounting</span>
<span class="t" style="left:235.7px;top:450.5px;font-size:16px;color:#cdcbc8;font-weight:700;letter-spacing:-0.320px;text-rendering:geometricPrecision;">Accounting</span>
<span class="t" style="left:336.7px;top:258.5px;font-size:16px;color:#fff;font-weight:700;letter-spacing:-0.618px;text-rendering:geometricPrecision;">Economics</span>
<span class="t" style="left:336.7px;top:450.5px;font-size:16px;color:#cdcbc8;font-weight:700;letter-spacing:-0.618px;text-rendering:geometricPrecision;">Economics</span>
<span class="t" style="left:439.2px;top:258.5px;font-size:16px;color:#fff;font-weight:700;letter-spacing:-0.438px;text-rendering:geometricPrecision;">Finance</span>
<span class="t" style="left:439.2px;top:450.5px;font-size:16px;color:#cdcbc8;font-weight:700;letter-spacing:-0.438px;text-rendering:geometricPrecision;">Finance</span>
<span class="t" style="left:519.0px;top:258.5px;font-size:16px;color:#fff;font-weight:700;letter-spacing:0.102px;text-rendering:geometricPrecision;">Marketing</span>
<span class="t" style="left:519.0px;top:450.5px;font-size:16px;color:#cdcbc8;font-weight:700;letter-spacing:0.102px;text-rendering:geometricPrecision;">Marketing</span>
<span class="t" style="left:613.0px;top:258.5px;font-size:16px;color:#fff;font-weight:700;letter-spacing:-0.293px;text-rendering:geometricPrecision;">Investing</span>
<span class="t" style="left:613.0px;top:450.5px;font-size:16px;color:#cdcbc8;font-weight:700;letter-spacing:-0.293px;text-rendering:geometricPrecision;">Investing</span>
<span class="t" style="left:700.7px;top:258.5px;font-size:16px;color:#fff;font-weight:700;letter-spacing:0.400px;text-rendering:geometricPrecision;">Management</span>
<span class="t" style="left:700.7px;top:450.5px;font-size:16px;color:#cdcbc8;font-weight:700;letter-spacing:0.400px;text-rendering:geometricPrecision;">Management</span>
<span class="t" style="left:37.4px;top:282.5px;font-size:16px;color:#000;letter-spacing:-0.624px;text-rendering:geometricPrecision;">FY2016</span>
<span class="t" style="left:266.8px;top:282.5px;font-size:16px;color:#000;letter-spacing:-0.149px;text-rendering:geometricPrecision;">595,150</span>
<span class="t" style="left:369.8px;top:282.5px;font-size:16px;color:#000;letter-spacing:-0.149px;text-rendering:geometricPrecision;">902,327</span>
<span class="t" style="left:448.4px;top:282.5px;font-size:16px;color:#000;letter-spacing:0.021px;text-rendering:geometricPrecision;">911,914</span>
<span class="t" style="left:543.0px;top:282.5px;font-size:16px;color:#000;letter-spacing:-0.149px;text-rendering:geometricPrecision;">705,496</span>
<span class="t" style="left:630.6px;top:282.5px;font-size:16px;color:#000;letter-spacing:-0.149px;text-rendering:geometricPrecision;">501,277</span>
<span class="t" style="left:747.5px;top:282.5px;font-size:16px;color:#000;letter-spacing:-0.149px;text-rendering:geometricPrecision;">828,701</span>
<span class="t" style="left:37.4px;top:306.5px;font-size:16px;color:#000;letter-spacing:-0.624px;text-rendering:geometricPrecision;">FY2017</span>
<span class="t" style="left:266.8px;top:306.5px;font-size:16px;color:#000;letter-spacing:-0.149px;text-rendering:geometricPrecision;">243,827</span>
<span class="t" style="left:369.8px;top:306.5px;font-size:16px;color:#000;letter-spacing:-0.149px;text-rendering:geometricPrecision;">617,916</span>
<span class="t" style="left:448.4px;top:306.5px;font-size:16px;color:#000;letter-spacing:-0.149px;text-rendering:geometricPrecision;">275,735</span>
<span class="t" style="left:543.0px;top:306.5px;font-size:16px;color:#000;letter-spacing:-0.149px;text-rendering:geometricPrecision;">364,865</span>
<span class="t" style="left:630.6px;top:306.5px;font-size:16px;color:#000;letter-spacing:-0.149px;text-rendering:geometricPrecision;">166,456</span>
<span class="t" style="left:747.5px;top:306.5px;font-size:16px;color:#000;letter-spacing:-0.149px;text-rendering:geometricPrecision;">956,045</span>
<span class="t" style="left:37.4px;top:330.5px;font-size:16px;color:#000;letter-spacing:-0.624px;text-rendering:geometricPrecision;">FY2018</span>
<span class="t" style="left:266.8px;top:330.5px;font-size:16px;color:#000;letter-spacing:-0.149px;text-rendering:geometricPrecision;">728,417</span>
<span class="t" style="left:369.8px;top:330.5px;font-size:16px;color:#000;letter-spacing:-0.149px;text-rendering:geometricPrecision;">706,148</span>
<span class="t" style="left:448.4px;top:330.5px;font-size:16px;color:#000;letter-spacing:-0.149px;text-rendering:geometricPrecision;">177,670</span>
<span class="t" style="left:543.0px;top:330.5px;font-size:16px;color:#000;letter-spacing:-0.149px;text-rendering:geometricPrecision;">546,631</span>
<span class="t" style="left:630.6px;top:330.5px;font-size:16px;color:#000;letter-spacing:-0.149px;text-rendering:geometricPrecision;">956,082</span>
<span class="t" style="left:747.5px;top:330.5px;font-size:16px;color:#000;letter-spacing:-0.149px;text-rendering:geometricPrecision;">396,157</span>
<span class="t" style="left:37.4px;top:354.5px;font-size:16px;color:#000;letter-spacing:-0.624px;text-rendering:geometricPrecision;">FY2019</span>
<span class="t" style="left:266.8px;top:354.5px;font-size:16px;color:#000;letter-spacing:-0.149px;text-rendering:geometricPrecision;">171,332</span>
<span class="t" style="left:369.8px;top:354.5px;font-size:16px;color:#000;letter-spacing:-0.149px;text-rendering:geometricPrecision;">512,765</span>
<span class="t" style="left:448.4px;top:354.5px;font-size:16px;color:#000;letter-spacing:-0.149px;text-rendering:geometricPrecision;">234,585</span>
<span class="t" style="left:543.0px;top:354.5px;font-size:16px;color:#000;letter-spacing:-0.149px;text-rendering:geometricPrecision;">915,254</span>
<span class="t" style="left:630.6px;top:354.5px;font-size:16px;color:#000;letter-spacing:-0.149px;text-rendering:geometricPrecision;">888,852</span>
<span class="t" style="left:747.5px;top:354.5px;font-size:16px;color:#000;letter-spacing:-0.149px;text-rendering:geometricPrecision;">177,649</span>
<span class="t" style="left:37.4px;top:474.5px;font-size:16px;color:#000;letter-spacing:-0.624px;text-rendering:geometricPrecision;">FY2018</span>
<span class="t" style="left:266.8px;top:474.5px;font-size:16px;color:#000;letter-spacing:-0.149px;text-rendering:geometricPrecision;">728,417</span>
<span class="t" style="left:369.8px;top:474.5px;font-size:16px;color:#000;letter-spacing:-0.149px;text-rendering:geometricPrecision;">706,148</span>
<span class="t" style="left:448.4px;top:474.5px;font-size:16px;color:#000;letter-spacing:-0.149px;text-rendering:geometricPrecision;">177,670</span>
<span class="t" style="left:543.0px;top:474.5px;font-size:16px;color:#000;letter-spacing:-0.149px;text-rendering:geometricPrecision;">546,631</span>
<span class="t" style="left:630.6px;top:474.5px;font-size:16px;color:#000;letter-spacing:-0.149px;text-rendering:geometricPrecision;">956,082</span>
<span class="t" style="left:747.5px;top:474.5px;font-size:16px;color:#000;letter-spacing:-0.149px;text-rendering:geometricPrecision;">396,157</span>

<div class="a" style="left:32px;top:446px;width:776px;height:40px;border:3px solid #e9473f"></div>
<!-- badges -->
<div class="badge" style="left:104px;top:39px">2</div>
<div class="badge" style="left:823px;top:67.5px">3</div>
<div class="badge" style="left:815px;top:405px;text-indent:2.4px">1<i style="position:absolute;left:12px;top:28.8px;width:8px;height:5px;background:#e84a43"></i><i style="position:absolute;left:23.3px;top:28.8px;width:8px;height:5px;background:#e84a43"></i></div>

</div>
</body></html>
